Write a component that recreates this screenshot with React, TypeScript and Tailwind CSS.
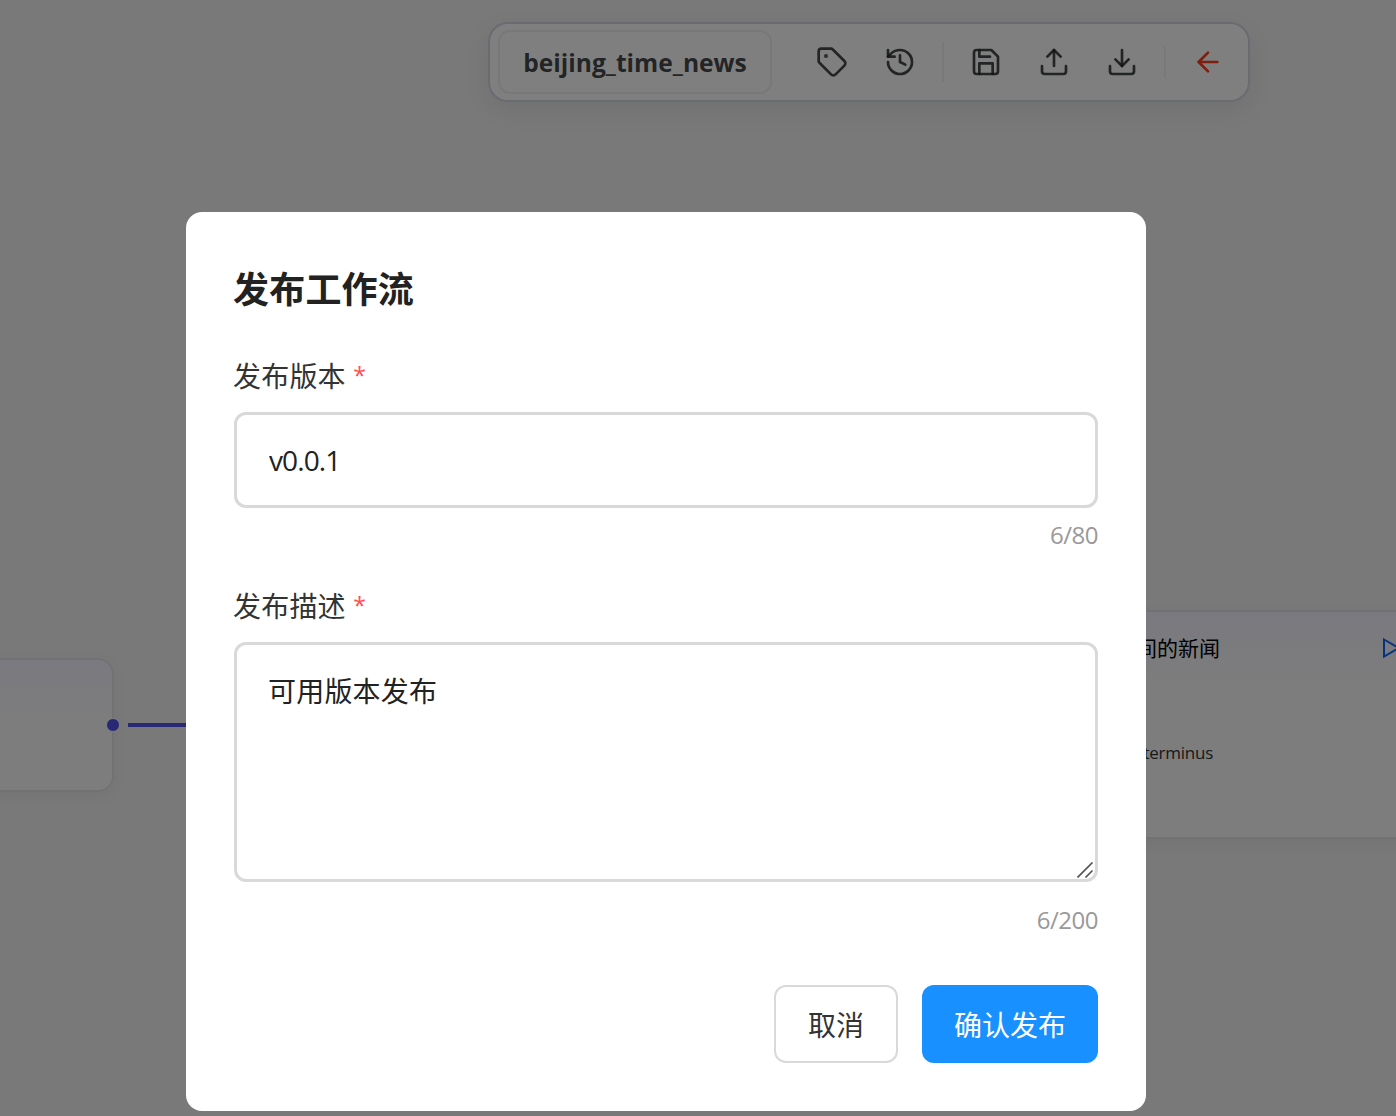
import React, { useState } from 'react';
import { ArrowLeft, History, Tag } from 'lucide-react';

interface CounterProps {
  length: number;
  max: number;
  className?: string;
}

interface IconProps {
  className?: string;
  children: React.ReactNode;
}

const Icon: React.FC<IconProps> = ({ className, children }) => (
  <svg
    className={`size-8 ${className ?? ''}`}
    viewBox="0 0 24 24"
    fill="none"
    stroke="currentColor"
    strokeWidth="2"
    strokeLinecap="round"
    strokeLinejoin="round"
  >
    {children}
  </svg>
);

const SaveIcon: React.FC<{ className?: string }> = ({ className }) => (
  <Icon className={className}>
    <path d="M19 21H5a2 2 0 0 1-2-2V5a2 2 0 0 1 2-2h11l5 5v11a2 2 0 0 1-2 2z" />
    <polyline points="17 21 17 13 7 13 7 21" />
    <polyline points="7 3 7 8 15 8" />
  </Icon>
);

const UploadIcon: React.FC<{ className?: string }> = ({ className }) => (
  <Icon className={className}>
    <path d="M21 15v4a2 2 0 0 1-2 2H5a2 2 0 0 1-2-2v-4" />
    <polyline points="17 8 12 3 7 8" />
    <line x1="12" x2="12" y1="3" y2="15" />
  </Icon>
);

const DownloadIcon: React.FC<{ className?: string }> = ({ className }) => (
  <Icon className={className}>
    <path d="M21 15v4a2 2 0 0 1-2 2H5a2 2 0 0 1-2-2v-4" />
    <polyline points="7 10 12 15 17 10" />
    <line x1="12" x2="12" y1="15" y2="3" />
  </Icon>
);

const Counter: React.FC<CounterProps> = ({ length, max, className }) => (
  <div className={`text-right text-[24px] leading-8 tracking-[-0.5px] text-[#999] ${className ?? ''}`}>
    {length}/{max}
  </div>
);

const FieldLabel: React.FC<{ text: string }> = ({ text }) => (
  <label className="-ml-px block h-[43px] pt-0.5 text-[28px] leading-[42px] tracking-[0.2px] text-[#333]">
    {text} <span className="relative -top-[3px] text-[23px] text-[#ff4d4f]">*</span>
  </label>
);

const Toolbar: React.FC<{ name: string }> = ({ name }) => (
  <div className="absolute left-[488px] top-[22px] flex h-20 w-[762px] items-center rounded-[20px] border-2 border-[#d5d7e3] bg-white pl-2 text-[#25282c]/85 shadow-[0_8px_24px_rgba(30,41,59,0.08)]">
    <div className="flex h-16 w-[274px] items-center justify-center rounded-xl border-2 border-[#f0f0f0] pt-0.5 text-[24.6px] font-bold">
      {name}
    </div>
    <Tag className="ml-11 size-8" />
    <History className="ml-9 size-8" />
    <div className="ml-[26px] h-10 w-0.5 bg-[#f2f2f2]" />
    <SaveIcon className="ml-[26px]" />
    <UploadIcon className="ml-9" />
    <DownloadIcon className="ml-9" />
    <div className="ml-[26px] h-8 w-0.5 bg-[#f2f2f2]" />
    <ArrowLeft className="ml-[26px] size-8 text-[#ff3b1f]" />
  </div>
);

const Canvas: React.FC = () => (
  <div className="absolute inset-0 bg-[#f2f2f2]">
    <div className="absolute -left-10 top-[658px] h-[134px] w-[153.5px] rounded-2xl border-2 border-[#e4e4e4] bg-linear-to-b from-[#f4f3ff] to-[#fbfbfb] to-50% shadow-[0_4px_16px_rgba(0,0,0,0.04)]" />
    <div className="absolute left-32 top-[723px] h-1 w-24 bg-[#4f52e8]" />
    <div className="absolute left-[106px] top-[718px] size-3.5 rounded-full border border-white bg-[#4f52e8]" />

    <div className="absolute left-[900px] top-[610px] h-[229px] w-[560px] rounded-2xl border-2 border-[#e4e4e4] bg-linear-to-b from-[#f4f3ff] to-[#fbfbfb] to-35% shadow-[0_4px_16px_rgba(0,0,0,0.05)]">
      <div className="w-[318px] pt-5 text-right text-[21px] leading-8 text-black">获取北京时间的新闻</div>
      <div className="w-[311px] pt-[77px] text-right text-[17px] leading-6 tracking-[-0.25px] text-[#333]">terminus</div>
      <svg
        className="absolute left-[476px] top-6 size-6 text-[#0969ff]"
        viewBox="0 0 24 24"
        fill="none"
        stroke="currentColor"
        strokeWidth="2"
      >
        <polygon points="6 3.5 21 12 6 20.5" />
      </svg>
    </div>

    <Toolbar name="beijing_time_news" />
  </div>
);

const PublishModal: React.FC = () => {
  const [version, setVersion] = useState('v0.0.1');
  const [description, setDescription] = useState('可用版本发布');

  return (
    <div className="h-[899px] w-[960px] rounded-2xl bg-white px-12 pt-12">
      <h2 className="-ml-px pt-px text-[36px] font-bold leading-[58px] tracking-[0.2px] text-[#222]">发布工作流</h2>

      <div className="mt-[34px]">
        <FieldLabel text="发布版本" />
        <input
          className="mt-4 block h-24 w-full rounded-xl border-3 border-[#d9d9d9] px-8 text-[28px] tracking-[-0.9px] text-[#222] outline-none"
          value={version}
          onChange={(e) => setVersion(e.target.value)}
        />
        <Counter length={version.length} max={80} className="mt-[11px]" />
      </div>

      <div className="mt-8">
        <FieldLabel text="发布描述" />
        <div className="relative mt-4">
          <textarea
            className="block h-60 w-full resize-none rounded-xl border-3 border-[#d9d9d9] pb-6 pl-[31px] pr-8 pt-[25px] text-[28px] leading-[42px] tracking-[0.2px] text-[#222] outline-none"
            value={description}
            onChange={(e) => setDescription(e.target.value)}
          />
          <svg
            className="absolute bottom-1 right-1 h-4 w-[17px] text-[#555]"
            viewBox="0 0 17 16"
            fill="none"
            stroke="currentColor"
            strokeWidth="1.7"
          >
            <path d="M0.5 15.5 15.5 0.5M8.5 15.5 15.5 8.5" />
          </svg>
        </div>
        <Counter length={description.length} max={200} className="mt-[22px]" />
      </div>

      <div className="mt-[49px] flex justify-end gap-6">
        <button className="h-[78px] w-[124px] rounded-xl border-2 border-[#d9d9d9] bg-white pt-0.5 text-[28px] text-[#333]">
          取消
        </button>
        <button className="h-[78px] w-44 rounded-xl bg-[#1890ff] pt-0.5 text-[28px] text-white">确认发布</button>
      </div>
    </div>
  );
};

const App: React.FC = () => (
  <div className="relative h-[1116px] w-[1396px] overflow-hidden font-['Open_Sans','Noto_Sans_CJK_SC',sans-serif]">
    <Canvas />
    <div className="absolute inset-0 bg-black/50 pl-[186px] pt-[212px]">
      <PublishModal />
    </div>
  </div>
);

export default App;
